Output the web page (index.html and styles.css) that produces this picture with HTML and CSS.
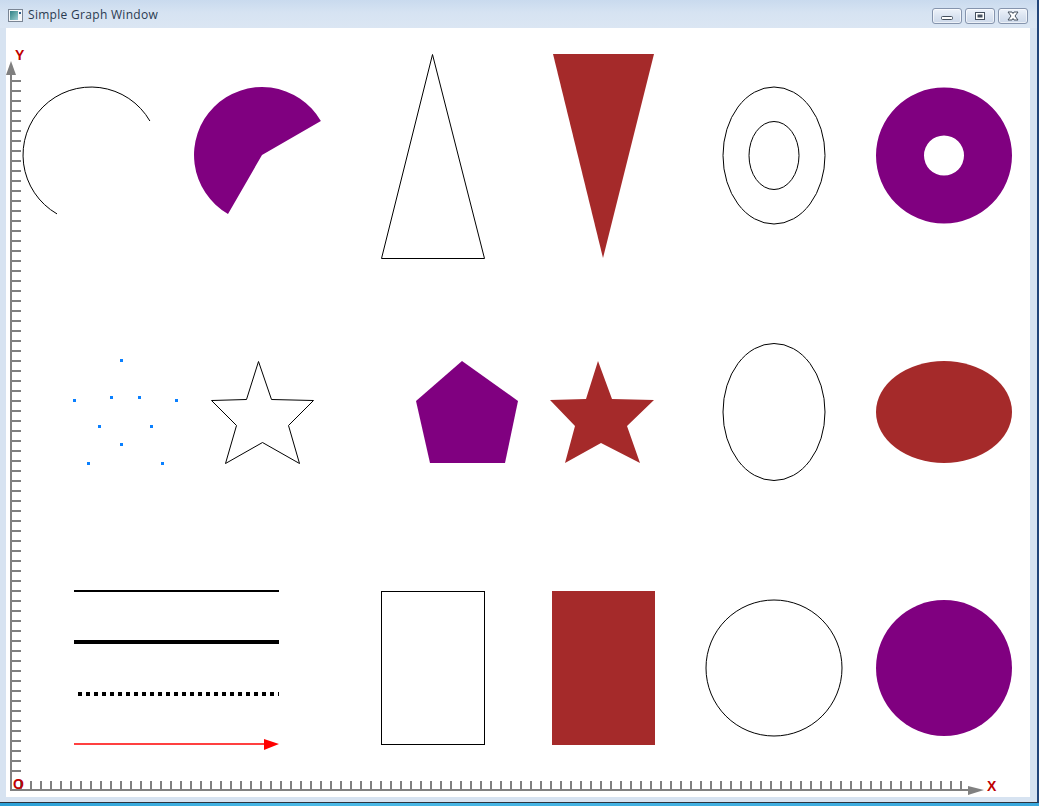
FILE: index.html
```html
<!DOCTYPE html>
<html>
<head>
<meta charset="utf-8">
<title>Simple Graph Window</title>
<link rel="stylesheet" href="styles.css">
</head>
<body>
<div class="window">
  <div class="titlebar">
    <svg class="app-icon" width="15" height="13" viewBox="0 0 15 13">
      <defs>
        <linearGradient id="ig" x1="0" y1="0" x2="1" y2="1">
          <stop offset="0" stop-color="#2f7f86"/>
          <stop offset="0.6" stop-color="#6fb0b0"/>
          <stop offset="1" stop-color="#9cc9d8"/>
        </linearGradient>
      </defs>
      <rect x="0.5" y="0.5" width="14" height="12" fill="#f4f6f8" stroke="#7a8594"/>
      <rect x="2" y="2" width="8" height="9" fill="url(#ig)"/>
      <rect x="11" y="3" width="2" height="2" fill="#2f5e8c"/>
    </svg>
    <span class="title">Simple Graph Window</span>
    <div class="controls">
      <div class="btn">
        <svg width="30" height="16" viewBox="0 0 30 16"><rect x="9.5" y="8.5" width="11" height="3" rx="1" fill="#fff" stroke="#45505e"/></svg>
      </div>
      <div class="btn">
        <svg width="30" height="16" viewBox="0 0 30 16"><rect x="10.5" y="4.5" width="9" height="7" fill="#fff" stroke="#45505e"/><rect x="12.5" y="6.5" width="5" height="3" fill="#45505e"/></svg>
      </div>
      <div class="btn">
        <svg width="30" height="16" viewBox="0 0 30 16"><path d="M10 4 L14 4 L15 5.5 L16 4 L20 4 L17 8 L20 12 L16 12 L15 10.5 L14 12 L10 12 L13 8 Z" fill="#fff" stroke="#45505e" stroke-linejoin="round"/></svg>
      </div>
    </div>
  </div>
  <div class="frame">
    <div class="client">
      <svg class="canvas" width="1024" height="769" viewBox="6 28 1024 769">
        <!-- axes -->
        <g class="axis">
          <line x1="11" y1="70" x2="11" y2="791" stroke-width="2"/>
          <line x1="10" y1="790" x2="976" y2="790" stroke-width="2"/>
          <path id="yticks" d="" stroke-width="2"/>
          <path id="xticks" d="" stroke-width="2"/>
        </g>
        <polygon class="axis-head" points="6,75 11,61 16,75"/>
        <polygon class="axis-head" points="968,786 984,790 968,795"/>
        <text class="axis-label" x="15" y="60">Y</text>
        <text class="axis-label" x="13" y="789">O</text>
        <text class="axis-label" x="987" y="791">X</text>

        <!-- row 1 -->
        <path class="outline" d="M149.9 121 A68 68 0 1 0 57 213.9"/>
        <path class="purple" d="M262 155 L320.9 121 A68 68 0 1 0 228 213.9 Z"/>
        <polygon class="outline" points="432.5,54.5 381.5,258.5 484.5,258.5"/>
        <polygon class="brown" points="553,54 654,54 603,258"/>
        <ellipse class="outline" cx="774" cy="155.5" rx="51" ry="68.5"/>
        <ellipse class="outline" cx="774" cy="155.5" rx="25" ry="34"/>
        <path class="purple" fill-rule="evenodd" d="M876 155.5 A68 68 0 1 0 1012 155.5 A68 68 0 1 0 876 155.5 Z M924 155.5 A20 20 0 1 0 964 155.5 A20 20 0 1 0 924 155.5 Z"/>

        <!-- row 2 -->
        <g class="dots">
          <rect x="120" y="359" width="3" height="3"/>
          <rect x="73" y="399" width="3" height="3"/>
          <rect x="110" y="396" width="3" height="3"/>
          <rect x="138" y="396" width="3" height="3"/>
          <rect x="175" y="399" width="3" height="3"/>
          <rect x="98" y="425" width="3" height="3"/>
          <rect x="150" y="425" width="3" height="3"/>
          <rect x="120" y="443" width="3" height="3"/>
          <rect x="87" y="462" width="3" height="3"/>
          <rect x="161" y="462" width="3" height="3"/>
        </g>
        <polygon class="outline" points="258.5,361.5 271.5,399.5 313.5,400.5 288.5,425.5 299.5,463.5 262.5,442.5 225.5,463.5 236.5,425.5 211.5,400.5 246.5,399.5"/>
        <polygon class="purple" points="462,361 518,401 505,463 430,463 416,401"/>
        <polygon class="brown" points="598,361 612,399 654,400 627,426 640,463 601,443 565,463 575,426 550,400 586,399"/>
        <ellipse class="outline" cx="774" cy="412" rx="51" ry="68.5"/>
        <ellipse class="brown" cx="944" cy="412" rx="68" ry="51"/>

        <!-- row 3 -->
        <line class="ln" x1="74" y1="591" x2="279" y2="591" stroke-width="2"/>
        <line class="ln" x1="74" y1="642" x2="279" y2="642" stroke-width="4"/>
        <line class="ln" x1="78" y1="694" x2="279" y2="694" stroke-width="4" stroke-dasharray="4 4"/>
        <line class="red" x1="74" y1="744" x2="270" y2="744" stroke-width="1.4"/>
        <polygon fill="#ff0000" points="264,739 279,744 264,750"/>
        <rect class="outline" x="381.5" y="591.5" width="103" height="153"/>
        <rect class="brown" x="552" y="591" width="103" height="154"/>
        <circle class="outline" cx="774" cy="668" r="68"/>
        <circle class="purple" cx="944" cy="668" r="68"/>
      </svg>
    </div>
  </div>
  <div class="taskbar"></div>
</div>
<script>
  (function () {
    var y = "", x = "";
    for (var k = 0; k <= 69; k++) { var yy = 81 + 10 * k; y += "M12 " + yy + " H21 "; }
    for (var j = 0; j <= 94; j++) { var xx = 21 + 10 * j; x += "M" + xx + " 781 V790 "; }
    document.getElementById("yticks").setAttribute("d", y);
    document.getElementById("xticks").setAttribute("d", x);
  })();
</script>
</body>
</html>
```

FILE: styles.css
```css
html, body {
  margin: 0;
  padding: 0;
}
body {
  width: 1039px;
  height: 806px;
  overflow: hidden;
  background: #d7e3f1;
  font-family: "Open Sans", "Noto Sans", "DejaVu Sans", sans-serif;
}
.window {
  display: flex;
  flex-direction: column;
  width: 1039px;
  height: 806px;
}
.titlebar {
  height: 28px;
  display: flex;
  align-items: flex-start;
  padding-left: 8px;
  background: linear-gradient(#c9daee, #d6e3f2 45%, #dbe6f3);
  border-right: 2px solid #23467a;
}
.app-icon {
  margin-top: 9px;
  flex: none;
}
.title {
  margin-left: 5px;
  margin-top: 7px;
  font-size: 12px;
  line-height: 16px;
  letter-spacing: 0.3px;
  color: #2a3a50;
  white-space: nowrap;
}
.controls {
  margin-left: auto;
  margin-top: 8px;
  margin-right: 9px;
  display: flex;
  gap: 3px;
}
.btn {
  width: 28px;
  height: 14px;
  border: 1px solid #8594ad;
  border-radius: 3px;
  background: linear-gradient(#eef3fa, #dbe4f1 50%, #cdd9ea);
  box-shadow: inset 0 0 0 1px rgba(255,255,255,0.6);
  display: flex;
  align-items: center;
  justify-content: center;
  overflow: hidden;
}
.btn svg {
  display: block;
  flex: none;
}
.frame {
  display: flex;
  padding: 0 7px 5px 6px;
  border-right: 2px solid #23467a;
  border-bottom: 1px solid #2c3440;
  background: #d7e3f1;
}
.client {
  width: 1024px;
  height: 769px;
  background: #ffffff;
}
.canvas {
  display: block;
}
.taskbar {
  flex: 1;
  background: linear-gradient(90deg, #2b9fd6, #4bb9e6 30%, #39a7dc);
}
.axis line, .axis path {
  stroke: #808080;
  fill: none;
}
.axis-head {
  fill: #808080;
}
.axis-label {
  font-family: "Liberation Sans", Arial, sans-serif;
  font-size: 14px;
  font-weight: bold;
  fill: #c00000;
}
.outline {
  fill: none;
  stroke: #000000;
  stroke-width: 1;
}
.purple {
  fill: #800080;
}
.brown {
  fill: #a52a2a;
}
.dots rect {
  fill: #0a80ff;
}
.ln {
  stroke: #000000;
}
.red {
  stroke: #ff0000;
}
```
